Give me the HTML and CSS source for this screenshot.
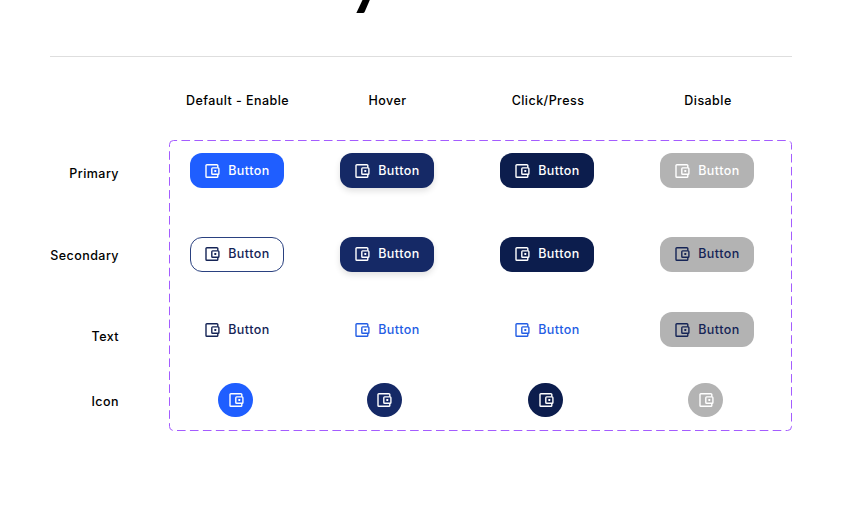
FILE: index.html
```html
<!DOCTYPE html>
<html lang="en">
<head>
<meta charset="utf-8">
<title>Button states</title>
<link rel="stylesheet" href="styles.css">
</head>
<body>
<svg class="defs" aria-hidden="true">
  <symbol id="wallet" viewBox="0 0 16 16">
    <path d="M13.8 4.8V2.6a.9.9 0 0 0-.9-.9H2.9a.9.9 0 0 0-.9.9v10.8a.9.9 0 0 0 .9.9h10a.9.9 0 0 0 .9-.9v-2.2"/>
    <rect x="7.8" y="4.9" width="7.1" height="6.3" rx=".8"/>
    <rect class="dot" x="10.3" y="7" width="2" height="2" rx=".4"/>
  </symbol>
</svg>
<header class="title"><span>y</span></header>
<main class="sheet">
  <div class="columns">
    <span class="label">Default - Enable</span>
    <span class="label">Hover</span>
    <span class="label">Click/Press</span>
    <span class="label">Disable</span>
  </div>
  <div class="body">
    <div class="rows">
      <span class="label">Primary</span>
      <span class="label">Secondary</span>
      <span class="label">Text</span>
      <span class="label">Icon</span>
    </div>
    <div class="frame">
      <svg class="outline" width="624" height="292" aria-hidden="true"><rect x=".5" y=".5" width="622" height="290" rx="4"/></svg>
      <div class="btn blue"><svg><use href="#wallet"/></svg><span>Button</span></div>
      <div class="btn navy raised"><svg><use href="#wallet"/></svg><span>Button</span></div>
      <div class="btn dark"><svg><use href="#wallet"/></svg><span>Button</span></div>
      <div class="btn gray"><svg><use href="#wallet"/></svg><span>Button</span></div>
      <div class="btn outlined"><svg><use href="#wallet"/></svg><span>Button</span></div>
      <div class="btn navy raised"><svg><use href="#wallet"/></svg><span>Button</span></div>
      <div class="btn dark"><svg><use href="#wallet"/></svg><span>Button</span></div>
      <div class="btn gray ink"><svg><use href="#wallet"/></svg><span>Button</span></div>
      <div class="btn ink"><svg><use href="#wallet"/></svg><span>Button</span></div>
      <div class="btn link"><svg><use href="#wallet"/></svg><span>Button</span></div>
      <div class="btn link"><svg><use href="#wallet"/></svg><span>Button</span></div>
      <div class="btn gray ink"><svg><use href="#wallet"/></svg><span>Button</span></div>
      <div class="round blue"><svg><use href="#wallet"/></svg></div>
      <div class="round navy"><svg><use href="#wallet"/></svg></div>
      <div class="round dark"><svg><use href="#wallet"/></svg></div>
      <div class="round gray"><svg><use href="#wallet"/></svg></div>
    </div>
  </div>
</main>
</body>
</html>
```

FILE: styles.css
```css
* { box-sizing: border-box; }
body {
  margin: 0;
  height: 523px;
  overflow: hidden;
  background: #fff;
  color: #000;
  font: 500 12.5px/18px Inter, sans-serif;
  letter-spacing: .45px;
}
.defs { position: absolute; width: 0; height: 0; }
.title {
  display: flex;
  align-items: flex-end;
  height: 56px;
  padding: 0 0 45px 349px;
  overflow: hidden;
  font: 700 64px/64px Lato, sans-serif;
}
.sheet {
  width: 742px;
  margin-left: 50px;
  border-top: 1px solid #dedede;
}
.columns {
  display: grid;
  grid-template-columns: 150px 160.5px 160px 94px;
  height: 83px;
  padding: 34.5px 0 0 140.5px;
}
.label { white-space: nowrap; }
.columns .label { width: 94px; display: flex; justify-content: center; }
.body { display: flex; }
.rows {
  display: grid;
  grid-template-rows: 82px 81px 65px 18px;
  width: 69px;
  padding-top: 24.5px;
  justify-items: end;
  align-content: start;
}
.frame {
  position: relative;
  display: grid;
  grid-template-columns: 150px 160px 160px 94px;
  grid-template-rows: 83.5px 75.5px 70.5px 35px;
  margin-left: 50px;
  width: 623px;
  height: 291px;
  flex: none;
  padding: 13.2px 0 0 21.2px;
}
.outline { position: absolute; inset: 0; fill: none; stroke: #a45cff; stroke-dasharray: 8.6 4.35; stroke-dashoffset: 5; }
.btn {
  display: flex;
  align-items: center;
  width: 94px;
  height: 35px;
  padding-left: 14px;
  gap: 8px;
  border-radius: 12px;
}
.btn svg, .round svg {
  width: 16px;
  height: 16px;
  fill: none;
  stroke: currentColor;
  stroke-width: 1.4;
}
.btn svg { flex: none; }
.dot { fill: currentColor; stroke: none; }
.round {
  display: flex;
  align-items: center;
  justify-content: center;
  width: 34.5px;
  height: 34.5px;
  margin-left: 28.2px;
  border-radius: 50%;
}
.round.navy { margin-left: 27px; }
.blue { background: #1f5eff; color: #fff; }
.navy { background: #152966; color: #fff; }
.dark { background: #0c1d4d; color: #fff; }
.gray { background: #b3b3b3; color: #fff; }
.ink { color: #152456; }
.link { color: #235de4; }
.outlined { border: 1px solid #2a4180; padding-left: 13px; color: #152456; }
.raised { box-shadow: 0 3px 6px rgba(0, 0, 0, .12); }
```
